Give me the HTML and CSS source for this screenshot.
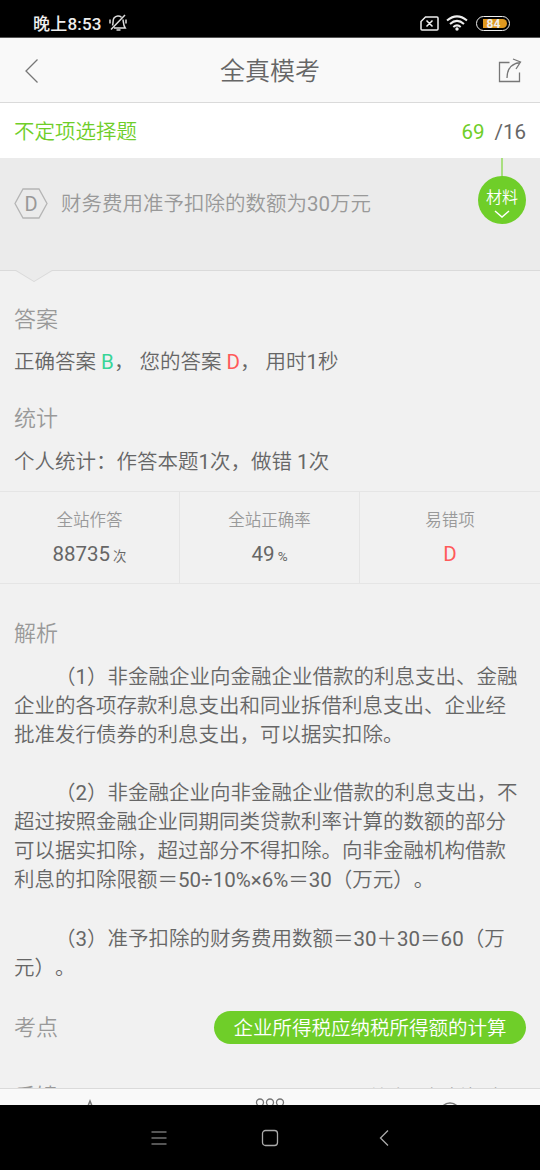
FILE: index.html
```html
<!DOCTYPE html>
<html lang="zh-CN">
<head>
<meta charset="utf-8">
<title>全真模考</title>
<link rel="stylesheet" href="styles.css">
</head>
<body>
<div class="screen">
  <div class="status">
    <span class="time">晚上8:53</span>
    <svg class="mute" width="20" height="18" viewBox="0 0 20 18" fill="none" stroke="#ddd" stroke-width="1.5"><path d="M4.500 11.500C5.500 9 4.500 6 6 4c2-2.600 5.500-2.500 7.500-.8M15 5.500c.5 3 .2 5.500 2.200 8.500H6M8.500 16h4M17 1L3 15.500M2 5.500v4M18 5.500v4"/></svg>
    <span class="grow"></span>
    <svg class="sim" width="19" height="15" viewBox="0 0 19 15" fill="none" stroke="#eee" stroke-width="1.5"><path d="M5.500 1H17Q18 1 18 2V13Q18 14 17 14H2Q1 14 1 13V5.500ZM6.500 4.500l6 6M12.500 4.500l-6 6"/></svg>
    <svg class="wifi" width="22" height="16" viewBox="0 0 22 16" fill="none" stroke="#eee" stroke-width="2"><path d="M1 5.500Q11-2.800 21 5.500M4 9Q11 2.800 18 9M7.300 12Q11 8.800 14.700 12"/><circle cx="11" cy="14" r="1.700" fill="#eee" stroke="none"/></svg>
    <span class="battery"><span class="level">84</span></span>
  </div>
  <header class="header">
    <svg width="14" height="26" viewBox="0 0 14 26" fill="none" stroke="#777" stroke-width="1.3"><path d="M12.500 1.500L1 13l11.500 11.500"/></svg>
    <h1 class="title">全真模考</h1>
    <svg width="24" height="25" viewBox="0 0 24 25" fill="none" stroke="#777" stroke-width="1.3"><path d="M11.500 4.500H1.500V23.500H21.500V14.500M9 20C9 11 13 5.500 22.500 4.500M15 1l7.500 3L18 11"/></svg>
  </header>
  <div class="type"><span class="typename">不定项选择题</span><span class="count"><b>69</b>/16</span></div>
  <section class="option">
    <span class="hex"><svg width="34" height="31" viewBox="0 0 34 31" fill="none" stroke="#b5b5b5" stroke-width="1.3"><path d="M9 1H25L33 15.500L25 30H9L1 15.500Z"/></svg><span class="letter">D</span></span>
    <span class="optiontext">财务费用准予扣除的数额为30万元</span>
    <span class="material">材料<svg width="16" height="9" viewBox="0 0 16 9" fill="none" stroke="#fff" stroke-width="1.500"><path d="M1 1l7 6 7-6"/></svg></span>
    <svg class="notch" width="40" height="13" viewBox="0 0 40 13"><path d="M1 0H39V1L20 12L1 1Z" fill="#ebebeb"/><path d="M0 .5H2L20 11.500L38 .5H40" fill="none" stroke="#dadada"/></svg>
  </section>
  <main class="content">
    <h2 class="heading answer">答案</h2>
    <p class="line">正确答案 <span class="right">B</span>， 您的答案 <span class="wrong">D</span>， 用时1秒</p>
    <h2 class="heading statistics">统计</h2>
    <p class="line">个人统计：作答本题1次，做错 1次</p>
    <div class="stats">
      <div class="stat"><span class="label">全站作答</span><span class="value">88735 <small>次</small></span></div>
      <div class="stat"><span class="label">全站正确率</span><span class="value">49 <small>%</small></span></div>
      <div class="stat"><span class="label">易错项</span><span class="value wrong">D</span></div>
    </div>
    <h2 class="heading analysis">解析</h2>
    <div class="explain">
      <p>（1）非金融企业向金融企业借款的利息支出、金融<br>企业的各项存款利息支出和同业拆借利息支出、企业经<br>批准发行债券的利息支出，可以据实扣除。</p>
      <p>（2）非金融企业向非金融企业借款的利息支出，不<br>超过按照金融企业同期同类贷款利率计算的数额的部分<br>可以据实扣除，超过部分不得扣除。向非金融机构借款<br>利息的扣除限额＝50÷10%×6%＝30（万元）。</p>
      <p>（3）准予扣除的财务费用数额＝30＋30＝60（万<br>元）。</p>
    </div>
    <div class="point"><h2 class="heading">考点</h2><span class="tag">企业所得税应纳税所得额的计算</span></div>
    <div class="more"><h2 class="heading">反馈</h2><span class="moretext">给本题解析提意见</span></div>
  </main>
  <nav class="tabs">
    <svg viewBox="0 0 180 16" fill="none" stroke="#777" stroke-width="1.500"><path d="M86 22l4-10 4 10"/></svg>
    <svg viewBox="0 0 180 16" fill="none" stroke="#777" stroke-width="1.300"><circle cx="80" cy="13.500" r="3.500"/><circle cx="90" cy="13.500" r="3.500"/><circle cx="100" cy="13.500" r="3.500"/></svg>
    <svg viewBox="0 0 180 16" fill="none" stroke="#777" stroke-width="1.500"><circle cx="90" cy="24" r="10"/></svg>
  </nav>
  <div class="system">
    <svg width="16" height="16" viewBox="0 0 16 16" fill="none" stroke="#aaa" stroke-width="1.200"><path d="M.5 2H15.500M.5 8H15.500M.5 14H15.500"/></svg>
    <svg width="18" height="18" viewBox="0 0 18 18" fill="none" stroke="#aaa" stroke-width="1.300"><rect x="1.500" y="1.500" width="15" height="15" rx="3"/></svg>
    <svg width="10" height="18" viewBox="0 0 10 18" fill="none" stroke="#aaa" stroke-width="1.300"><path d="M9 1.500L1.500 9 9 16.500"/></svg>
  </div>
</div>
</body>
</html>
```
FILE: styles.css
```css
* { box-sizing: border-box; }
body, h1, h2, p { margin: 0; }
h1, h2, b { font-weight: 400; }
body { font-family: Roboto, "Noto Sans CJK SC DemiLight", "Noto Sans CJK SC", sans-serif; font-weight: 400; color: #666; text-spacing-trim: space-all; }
svg { display: block; flex: none; }
.screen { width: 540px; height: 1170px; overflow: hidden; display: flex; flex-direction: column; background: #f1f1f1; }
.status { height: 38px; flex: none; background: #000; color: #eee; display: flex; align-items: center; padding: 9px 30px 0 33px; border-bottom: 1px solid #555; }
.time { font-family: Roboto, "Noto Sans CJK SC", sans-serif; font-size: 17px; font-weight: 500; line-height: 24px; padding-top: 1px; letter-spacing: .2px; }
.mute { margin-left: 6px; }
.grow { flex: 1; }
.wifi { margin: 0 8px 0 7px; }
.battery { width: 34px; height: 15px; border: 1.500px solid #eee; border-radius: 8px; padding: 2px 2px 2px 6px; }
.level { display: block; height: 9px; background: #df981f; border-radius: 0 5px 5px 0; font-size: 12px; line-height: 10px; font-weight: 700; text-align: center; padding-right: 3px; }
.header { height: 65px; flex: none; background: #f9f9f9; display: flex; align-items: center; justify-content: space-between; padding: 1px 18px 0 25px; border-bottom: 1px solid #dadada; }
.title { font-size: 25px; line-height: 36px; padding: 3px 0 0 3px; }
.type { height: 55px; flex: none; background: #fff; display: flex; align-items: center; justify-content: space-between; padding: 0 14px; font-size: 20.500px; color: #6fce29; }
.typename { padding-bottom: 1px; }
.count { color: #666; padding-top: 2px; }
.count b { color: #6fce29; margin-right: 10px; }
.option { height: 113px; flex: none; position: relative; background: #ebebeb; border-bottom: 1px solid #dadada; display: flex; align-items: flex-start; padding: 31px 14px 0; color: #999; }
.hex { display: grid; place-items: center; width: 34px; height: 31px; margin: -1px 13px 0 0; }
.hex > * { grid-area: 1 / 1; }
.letter { font-size: 20px; line-height: 30px; padding-top: 1px; }
.optiontext { font-size: 20.500px; line-height: 30px; }
.material { position: absolute; right: 14px; top: 18px; width: 48px; height: 48px; border-radius: 50%; background: #6fce29; color: #fff; font-size: 16px; line-height: 22px; display: flex; flex-direction: column; align-items: center; padding-top: 11px; gap: 1px; }
.material::before { content: ""; position: absolute; top: -18px; left: 23px; width: 2px; height: 18px; background: #a9df80; }
.notch { position: absolute; left: 14px; top: 112px; }
.content { flex: 1; min-height: 0; overflow: hidden; }
.heading { font-size: 22px; line-height: 32px; color: #999; padding-left: 14px; }
.answer { padding-top: 33px; }
.line { font-size: 20.500px; line-height: 30px; padding-left: 14px; margin-top: 11px; }
.right { color: #38d597; }
.wrong { color: #ff5a5a; }
.statistics { margin-top: 26px; padding-bottom: 1px; }
.stats { display: grid; grid-template-columns: repeat(3, 1fr); height: 93px; margin-top: 14px; border-top: 1px solid #e5e5e5; border-bottom: 1px solid #e5e5e5; }
.stat { display: flex; flex-direction: column; align-items: center; padding-top: 16px; border-right: 1px solid #e5e5e5; }
.stat:last-child { border: 0; }
.label { color: #999; font-size: 16.500px; line-height: 25px; }
.value { font-size: 20.500px; line-height: 30px; margin-top: 6px; }
.value small { font-size: 13.500px; margin-left: -2px; }
.analysis { margin-top: 34px; }
.explain { font-size: 20.500px; line-height: 29.080px; margin-top: 13px; padding-left: 14px; white-space: nowrap; }
.explain p { text-indent: 41px; margin-bottom: 29px; }
.point { display: flex; align-items: center; justify-content: space-between; height: 32px; padding-right: 14px; }
.point .heading { padding-top: 1px; }
.tag { background: #6fce29; color: #fff; border-radius: 17px; height: 33px; line-height: 35px; padding: 0 19.500px; font-size: 19.500px; }
.more { display: flex; align-items: flex-start; justify-content: space-between; margin-top: 37px; padding-right: 15px; font-size: 19.500px; line-height: 32px; color: #999; }
.moretext { padding-top: 1px; }
.tabs { height: 17px; flex: none; border-top: 1px solid #dadada; background: #f9f9f9; display: grid; grid-template-columns: repeat(3, 180px); }
.tabs svg { width: 180px; height: 16px; }
.system { height: 65px; flex: none; background: #000; display: flex; align-items: center; padding-left: 150.500px; }
.system svg:nth-child(2) { margin-left: 94px; }
.system svg:nth-child(3) { margin-left: 100px; }
```
